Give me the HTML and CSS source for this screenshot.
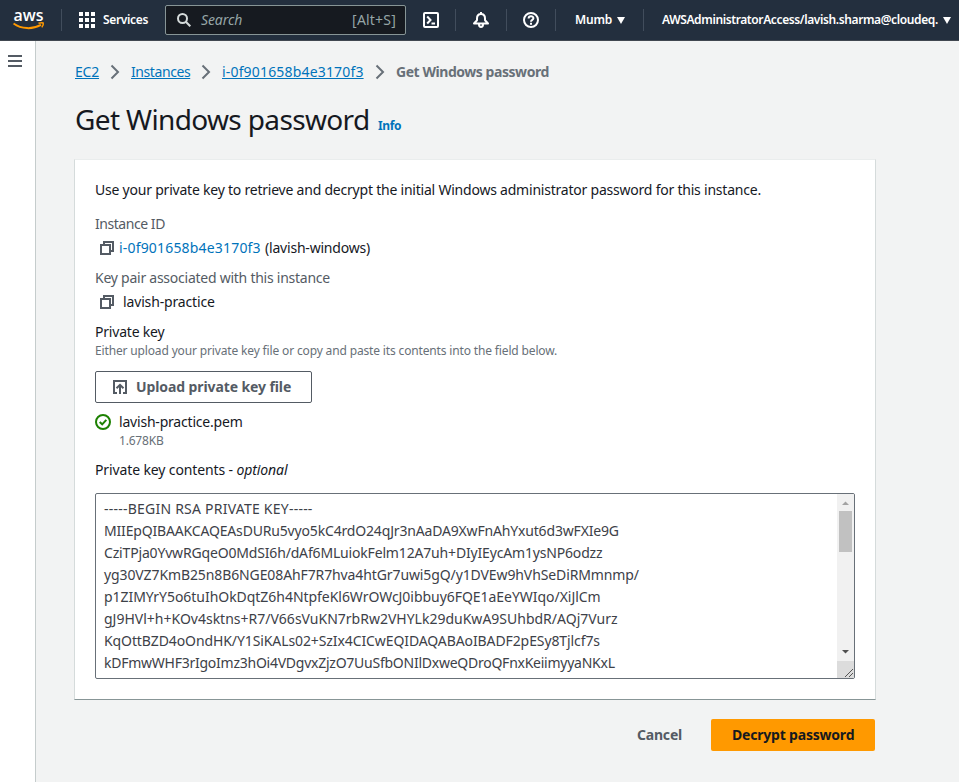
FILE: index.html
```html
<!DOCTYPE html>
<html lang="en">
<head>
<meta charset="utf-8">
<title>Get Windows password</title>
<link rel="stylesheet" href="styles.css">
</head>
<body>
<header class="topnav">
  <a class="logo"><svg width="32" height="32" viewBox="0 0 32 32"><text class="logo-text" x="0.5" y="17" textLength="30" lengthAdjust="spacingAndGlyphs">aws</text><path d="M0.500 19.500c8 5.800 19 6 27.500 1.400" fill="none" stroke="#f90" stroke-width="2"/><path d="M25.500 19.200c2-.6 4-.6 4.700-.2.300 1-.3 3-1.400 4.400" fill="none" stroke="#f90" stroke-width="1.500"/></svg></a>
  <a class="services"><svg width="16" height="16" fill="#fff"><path d="M0 0h4v4H0zM6 0h4v4H6zM12 0h4v4h-4zM0 6h4v4H0zM6 6h4v4H6zM12 6h4v4h-4zM0 12h4v4H0zM6 12h4v4H6zM12 12h4v4h-4z"/></svg><span class="services-text">Services</span></a>
  <div class="search"><svg width="14" height="14" fill="none" stroke="#d5dbdb" stroke-width="2"><circle cx="5.500" cy="5.500" r="4.500"/><path d="M8.800 8.800l4.500 4.500"/></svg><span class="search-text">Search</span><span class="shortcut">[Alt+S]</span></div>
  <a class="tool shell"><svg width="16" height="16" fill="none" stroke="#fff" stroke-width="2"><rect x="1" y="1" width="14" height="14" rx="1"/><path d="M4.200 4.500L7.500 8l-3.300 3.500M8.500 11.500H12"/></svg></a>
  <a class="tool"><svg width="18" height="18" viewBox="0 0 18 18" fill="none" stroke="#fff" stroke-width="2" stroke-linejoin="round"><path d="M2 12.500L5 9.300V7.500C5 4.500 6.500 3 9 3s4 1.500 4 4.500v1.800l3 3.200zM7 13.500c0 3.300 4 3.300 4 0M9 1v2"/></svg></a>
  <a class="tool help"><svg width="16" height="16" fill="none" stroke="#fff" stroke-width="2"><circle cx="8" cy="8" r="7"/><path d="M5.600 6.500C5.600 3.400 10.400 3.400 10.400 6.300 10.400 8 8 7.700 8 9.700M8 10.700v2"/></svg></a>
  <a class="region"><span class="region-text">Mumb</span><i class="caret"></i></a>
  <a class="account"><span class="account-text">AWSAdministratorAccess/lavish.sharma@cloudeq.</span><i class="caret"></i></a>
</header>
<div class="shell-body">
  <aside class="side"><i></i><i></i><i></i></aside>
  <main class="main">
    <nav class="crumbs">
      <a class="c-ec2">EC2</a><svg class="chev" width="10" height="16"><path d="M1.500 1.500L8 8l-6.500 6.500"/></svg>
      <a class="c-inst">Instances</a><svg class="chev" width="10" height="16"><path d="M1.500 1.500L8 8l-6.500 6.500"/></svg>
      <a class="c-id">i-0f901658b4e3170f3</a><svg class="chev" width="10" height="16"><path d="M1.500 1.500L8 8l-6.500 6.500"/></svg>
      <b>Get Windows password</b>
    </nav>
    <div class="title"><h1>Get Windows password</h1><a>Info</a></div>
    <section class="card">
      <p class="intro">Use your private key to retrieve and decrypt the initial Windows administrator password for this instance.</p>
      <div class="label l-id">Instance ID</div>
      <div class="value"><svg class="copy" width="14" height="14"><path d="M1 4h9v9H1z"/><path d="M4 4V1h9v9h-3"/></svg><span class="v-id"><a>i-0f901658b4e3170f3</a></span><span class="v-name">(lavish-windows)</span></div>
      <div class="label l-pair">Key pair associated with this instance</div>
      <div class="value"><svg class="copy" width="14" height="14"><path d="M1 4h9v9H1z"/><path d="M4 4V1h9v9h-3"/></svg><span class="v-pair">lavish-practice</span></div>
      <div class="field-label"><span class="f-key">Private key</span></div>
      <div class="hint">Either upload your private key file or copy and paste its contents into the field below.</div>
      <button class="upload"><svg width="14" height="14" fill="none" stroke="#545b64" stroke-width="2"><path d="M4 13H1V1h12v12h-3M7 14V5M3.500 8.300L7 4.800l3.500 3.500"/></svg><span>Upload private key file</span></button>
      <div class="file"><svg width="16" height="16" fill="none" stroke="#1d8102" stroke-width="2"><circle cx="8" cy="8" r="7"/><path d="M4.700 8L7.200 10.300 11.300 5.800"/></svg><div><div class="file-name">lavish-practice.pem</div><div class="file-size">1.678KB</div></div></div>
      <div class="contents-label">Private key contents - <em>optional</em></div>
      <div class="area">
        <div class="key">
          <div class="k0">-----BEGIN RSA PRIVATE KEY-----</div>
          <div class="k1">MIIEpQIBAAKCAQEAsDURu5vyo5kC4rdO24qJr3nAaDA9XwFnAhYxut6d3wFXIe9G</div>
          <div class="k2">CziTPja0YvwRGqeO0MdSI6h/dAf6MLuiokFelm12A7uh+DIyIEycAm1ysNP6odzz</div>
          <div class="k3">yg30VZ7KmB25n8B6NGE08AhF7R7hva4htGr7uwi5gQ/y1DVEw9hVhSeDiRMmnmp/</div>
          <div class="k4">p1ZIMYrY5o6tuIhOkDqtZ6h4NtpfeKl6WrOWcJ0ibbuy6FQE1aEeYWIqo/XiJlCm</div>
          <div class="k5">gJ9HVl+h+KOv4sktns+R7/V66sVuKN7rbRw2VHYLk29duKwA9SUhbdR/AQj7Vurz</div>
          <div class="k6">KqOttBZD4oOndHK/Y1SiKALs02+SzIx4CICwEQIDAQABAoIBADF2pESy8Tjlcf7s</div>
          <div class="k7">kDFmwWHF3rIgoImz3hOi4VDgvxZjzO7UuSfbONIlDxweQDroQFnxKeiimyyaNKxL</div>
        </div>
        <div class="scroll"><svg width="17" height="17"><path d="M5 11h7L8.500 7.500z" fill="#a3a3a3"/></svg><div class="thumb"></div><svg class="down" width="17" height="17"><path d="M5 6h7L8.500 9.500z" fill="#505050"/></svg><svg class="grip" width="17" height="17"><path d="M8 16l8-8M12 16l4-4" stroke="#555" fill="none"/></svg></div>
      </div>
    </section>
    <div class="actions"><a class="cancel">Cancel</a><button class="primary"><span>Decrypt password</span></button></div>
  </main>
</div>
</body>
</html>
```
FILE: styles.css
```css
* { box-sizing: border-box; }
body { margin: 0; background: #f2f3f3; color: #16191f; font: 14px/22px "Noto Sans", sans-serif; white-space: nowrap; letter-spacing: -0.2px; }
svg { display: block; flex: none; }
.topnav { height: 41px; background: #232f3e; border-bottom: 1px solid #414750; color: #fff; display: flex; align-items: center; font-size: 12px; font-weight: 600; }
.topnav > a { display: flex; align-items: center; height: 22px; flex: none; }
.topnav > .logo { width: 62px; padding-left: 13px; border-right: 1px solid #414d5c; }
.logo-text { font: 600 16px "Open Sans", sans-serif; fill: #fff; letter-spacing: 0; }
.services { width: 103px; padding-left: 17px; gap: 8px; letter-spacing: -0.35px; }
.search { width: 241px; height: 30px; background: #161a20; border: 1px solid #879596; border-radius: 2px; display: flex; align-items: center; padding: 0 9px 0 11px; color: #95a5a6; font-size: 14px; font-weight: 400; flex: none; }
.search-text { font-style: italic; margin-left: 10px; letter-spacing: -0.1px; }
.shortcut { margin-left: auto; letter-spacing: 0.2px; }
.topnav > .tool { width: 51px; justify-content: center; border-right: 1px solid #414d5c; }
.topnav > .shell { width: 50px; }
.topnav > .help { width: 49px; }
.region { width: 88px; padding-left: 19px; border-right: 1px solid #414d5c; }
.account { padding-left: 18px; }
.region-text { width: 42px; }
.account-text { width: 281px; letter-spacing: -0.39px; }
.caret { border: 4px solid transparent; border-top: 7px solid #fff; border-bottom: 0; }
.shell-body { display: flex; height: 741px; }
.side { width: 36px; background: #fff; border-right: 1px solid #c5cccc; padding: 14px 0 0 8px; flex: none; }
.side i { display: block; width: 14px; height: 2px; background: #545b64; margin-bottom: 3px; }
.main { padding: 20px 0 0 39px; width: 840px; }
.crumbs { display: flex; align-items: center; height: 22px; color: #687078; }
.crumbs a { color: #0073bb; text-decoration: underline; }
.crumbs b { font-weight: 700; letter-spacing: -0.45px; }
.chev { margin: 0 11px; fill: none; stroke: #687078; stroke-width: 2; }
.c-ec2 { width: 24px; }
.crumbs .c-inst { width: 59px; letter-spacing: -0.42px; }
.crumbs .c-id { width: 142px; letter-spacing: 0.17px; }
.title { display: flex; align-items: baseline; height: 36px; margin: 18px 0 22px; }
h1 { margin: 0; font-size: 28px; line-height: 36px; font-weight: 400; width: 303px; letter-spacing: -0.64px; }
.title a { color: #0073bb; font-size: 12px; font-weight: 700; letter-spacing: -0.4px; }
.card { width: 802px; height: 541px; margin-left: -1px; background: #fff; border: 1px solid #d5dbdb; border-top-color: #eaeded; border-bottom-color: #879596; padding: 19px 20px 0 20px; }
.intro { margin: 0 0 12px; letter-spacing: -0.22px; }
.label { color: #545b64; height: 22px; letter-spacing: -0.25px; }
.l-id { letter-spacing: -0.45px; }
.value { display: flex; align-items: center; height: 22px; margin: 2px 0 8px; padding-left: 5px; }
.copy { fill: none; stroke: #545b64; stroke-width: 2; margin-right: 5px; }
.v-id { width: 146px; letter-spacing: 0.18px; }
.v-id a { color: #0073bb; }
.v-pair { margin-left: 4px; letter-spacing: -0.15px; }
.hint { color: #687078; font-size: 12px; line-height: 16px; letter-spacing: -0.15px; }
button { font: 700 14px/20px "Noto Sans", sans-serif; border-radius: 2px; }
.upload { display: flex; align-items: center; width: 217px; height: 32px; margin-top: 12px; padding: 0 0 0 17px; gap: 9px; border: 1px solid #545b64; background: #fff; color: #545b64; letter-spacing: -0.1px; }
.file { display: flex; gap: 8px; margin-top: 8px; }
.file svg { margin-top: 3px; }
.file-size { color: #687078; font-size: 12px; line-height: 16px; }
.contents-label { margin: 10px 0 12px; letter-spacing: -0.12px; }
.area { width: 760px; height: 186px; border: 1px solid #687078; border-radius: 2px; display: flex; justify-content: space-between; overflow: hidden; }
.key { padding: 4px 8px; color: #3d4148; }
.k0 { letter-spacing: 0.23px; }
.k1, .k2 { letter-spacing: -0.17px; }
.k3 { letter-spacing: -0.11px; }
.k4 { letter-spacing: -0.04px; }
.k5 { letter-spacing: 0; }
.k6 { letter-spacing: -0.1px; }
.k7 { letter-spacing: -0.25px; }
.scroll { width: 17px; background: #f1f1f1; display: flex; flex-direction: column; }
.thumb { width: 13px; height: 41px; margin-left: 2px; background: #c1c1c1; }
.down { margin-top: auto; }
.grip { background: #dcdcdc; }
.actions { display: flex; justify-content: flex-end; align-items: center; width: 800px; margin-top: 19px; height: 32px; font-weight: 700; }
.cancel { color: #545b64; width: 74px; }
.primary { width: 164px; height: 32px; border: 0; padding: 0 0 0 21px; text-align: left; background: #f90; color: #16191f; letter-spacing: -0.2px; }
```
